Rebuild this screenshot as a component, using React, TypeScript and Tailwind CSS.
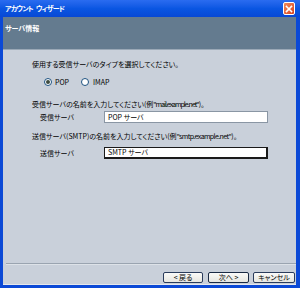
import React from "react";

function Radio({ checked }: { checked?: boolean }) {
  return (
    <span className="w-[8px] h-[8px] rounded-full border border-[#1c5180] bg-white flex items-center justify-center shrink-0">
      {checked && <span className="w-[4px] h-[4px] rounded-full bg-[#3d4a3d]" />}
    </span>
  );
}

function Btn({ children, w, def }: { children: React.ReactNode; w: string; def?: boolean }) {
  return (
    <div
      className={`${w} h-[11px] rounded-[2px] bg-gradient-to-b from-[#fafaf8] to-[#e6e6e0] flex items-center justify-center text-[7px] leading-none text-black ${
        def ? "border-[1.5px] border-[#1a2a44]" : "border border-[#2a3c5c]"
      }`}
    >
      {children}
    </div>
  );
}

export default function App() {
  return (
    <div className="w-[300px] h-[288px] flex flex-col bg-[#0b49d6] font-['Noto_Sans_CJK_JP',sans-serif] [font-feature-settings:'palt'] overflow-hidden">
      {/* title bar */}
      <div className="h-[17px] shrink-0 bg-gradient-to-b from-[#2a6cf0] via-[#0a56e2] to-[#0848d4] flex items-center pl-[5px] pr-[5px]">
        <span className="text-white text-[7px] leading-none font-semibold tracking-[-0.8px]">アカウント</span>
        <span className="text-white text-[7px] leading-none font-semibold tracking-[-0.8px] ml-[3px]">ウィザード</span>
        <div className="ml-auto w-[12px] h-[13px] rounded-[2px] border border-white bg-gradient-to-br from-[#f08a5a] to-[#d8401c] flex items-center justify-center">
          <svg width="8" height="8" viewBox="0 0 8 8">
            <path d="M1.5 1.5 L6.5 6.5 M6.5 1.5 L1.5 6.5" stroke="white" strokeWidth="1.6" strokeLinecap="square" />
          </svg>
        </div>
      </div>
      <div className="flex-1 flex flex-col pl-[3px] pr-[4px] pb-[3px]">
        <div className="flex-1 flex flex-col bg-[#c9d0da] border-b border-[#e6e8ec]">
          {/* header */}
          <div className="h-[33px] shrink-0 bg-[#647b8f] border-b border-[#9aa8b6] flex items-start pt-[8px] pl-[2px]">
            <span className="text-white text-[7px] leading-none font-bold">サーバ情報</span>
          </div>
          {/* content */}
          <div className="flex flex-col pl-[29px] text-[7px] leading-none text-black">
            <div className="h-[10px] mt-[9px] flex items-center">使用する受信サーバのタイプを選択してください。</div>
            <div className="h-[10px] mt-[8px] flex items-center pl-[12px]">
              <Radio checked />
              <span className="ml-[3px]">POP</span>
              <span className="ml-[12px]"><Radio /></span>
              <span className="ml-[4px]">IMAP</span>
            </div>
            <div className="h-[10px] mt-[12px] flex items-center">
              受信サーバの名前を入力してください(例<span className="tracking-[-1px]">"mail.example.net"</span>)。
            </div>
            <div className="h-[12px] mt-[2px] flex items-center">
              <span className="w-[72px] pl-[8px]">受信サーバ</span>
              <div className="w-[164px] h-[12px] bg-white border border-[#8a96a4] flex items-center pl-[3px]">POP サーバ</div>
            </div>
            <div className="h-[10px] mt-[8px] flex items-center">
              送信サーバ(SMTP)の名前を入力してください(例<span className="tracking-[-0.6px]">"smtp.example.net"</span>)。
            </div>
            <div className="h-[12px] mt-[6px] flex items-center">
              <span className="w-[72px] pl-[8px]">送信サーバ</span>
              <div className="w-[164px] h-[12px] bg-white border border-[#1a1a1a] border-r-2 border-b-2 flex items-center pl-[3px]">SMTP サーバ</div>
            </div>
          </div>
          <div className="flex-1" />
          {/* separator */}
          <div className="ml-[3px] h-[2px] border-t border-[#9aa4b0] border-b border-b-[#dde2e8]" />
          {/* buttons */}
          <div className="flex justify-end items-center pt-[7px] pb-[1px] pr-[1px]">
            <Btn w="w-[40px]">&lt; 戻る</Btn>
            <div className="w-[5px]" />
            <Btn w="w-[41px]" def>次へ &gt;</Btn>
            <div className="w-[4px]" />
            <Btn w="w-[42px]">キャンセル</Btn>
          </div>
        </div>
      </div>
    </div>
  );
}
